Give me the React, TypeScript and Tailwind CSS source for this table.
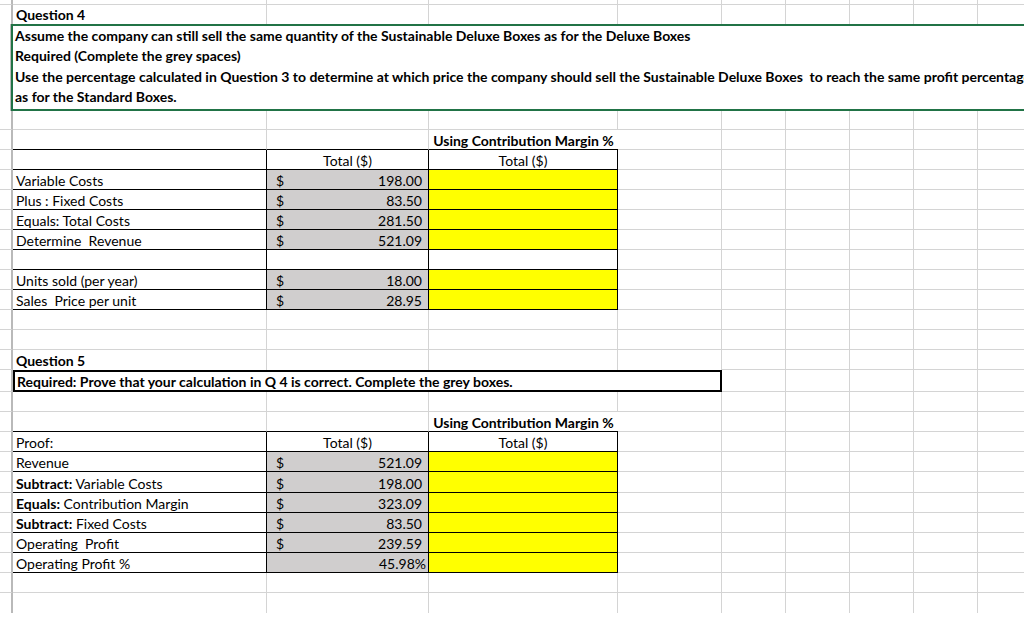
const COLS =
  'grid grid-cols-[13px_254px_162px_189px_104px_64px_64px_64px_64px_64px]'

const GRID = 'border-r border-b border-[#d4d4d4]'

function Stub({ noLine }: { noLine?: boolean }) {
  return (
    <div
      className={
        noLine
          ? 'border-r-2 border-r-[#b9b9b9]'
          : 'border-r-2 border-b border-r-[#b9b9b9] border-b-[#d4d4d4]'
      }
    />
  )
}

function Blank({ n, className = GRID }: { n: number; className?: string }) {
  return (
    <>
      {Array.from({ length: n }).map((_, i) => (
        <div key={i} className={className} />
      ))}
    </>
  )
}

function Label({
  children,
  boxed,
  className = '',
}: {
  children?: React.ReactNode
  boxed?: boolean
  className?: string
}) {
  return (
    <div
      className={`flex items-end whitespace-pre pl-[3px] leading-[17px] ${
        boxed ? 'border-r border-b border-black' : GRID
      } ${className}`}
    >
      {children}
    </div>
  )
}

function Money({ value, dollar = true }: { value: string; dollar?: boolean }) {
  return (
    <div className="flex items-end justify-between whitespace-nowrap border-r border-b border-black bg-[#d0cece] pl-[9px] pr-[6px] leading-[17px]">
      <span>{dollar ? '$' : ''}</span>
      <span className={dollar ? '' : '-mr-[4px]'}>{value}</span>
    </div>
  )
}

function Yellow() {
  return <div className="border-r border-b border-black bg-[#ffff00]" />
}

function TableBlock({
  first,
  rows,
}: {
  first: string
  rows: { label: React.ReactNode; value?: string; dollar?: boolean; h?: string }[]
}) {
  return (
    <>
      <div className={`${COLS} h-[20px]`}>
        <Stub />
        <div className="border-r border-b border-r-[#d4d4d4] border-b-black" />
        <div className="border-r border-b border-r-[#d4d4d4] border-b-black" />
        <div className="flex items-end justify-center whitespace-nowrap border-b border-b-black font-bold leading-[17px]">
          Using Contribution Margin %
        </div>
        <Blank n={6} />
      </div>
      <div className={`${COLS} h-[20px]`}>
        <Stub />
        <Label boxed>{first}</Label>
        <div className="flex items-end justify-center border-r border-b border-black leading-[17px]">
          Total ($)
        </div>
        <div className="flex items-end justify-center border-r border-b border-black leading-[17px]">
          Total ($)
        </div>
        <Blank n={6} />
      </div>
      {rows.map((r, i) => (
        <div key={i} className={`${COLS} ${r.h ?? 'h-[20px]'}`}>
          <Stub />
          <Label boxed>{r.label}</Label>
          {r.value ? (
            <Money value={r.value} dollar={r.dollar !== false} />
          ) : (
            <div className="border-r border-b border-black" />
          )}
          {r.value ? <Yellow /> : <div className="border-r border-b border-black" />}
          <Blank n={6} />
        </div>
      ))}
    </>
  )
}

export default function App() {
  return (
    <div className="h-[628px] w-[1024px] overflow-hidden bg-white font-['Lato',sans-serif] text-[14px] text-black">
      {/* partial top row */}
      <div className={`${COLS} h-[5px]`}>
        <Stub />
        <Blank n={9} />
      </div>

      <div className={`${COLS} h-[19px]`}>
        <Stub noLine />
        <Label className="border-b-0 pb-[1px] font-bold">Question 4</Label>
        <Blank n={8} className="border-r border-[#d4d4d4]" />
      </div>

      {/* green merged block */}
      <div className="flex h-[87px]">
        <div className="w-[12px] shrink-0 border-r-2 border-r-[#b9b9b9]" />
        <div className="-ml-[1px] w-[1040px] shrink-0 whitespace-nowrap border-2 border-r-0 border-[#217346] pl-[2px] font-bold leading-[20.4px]">
          <div>
            Assume the company can still sell the same quantity of the Sustainable Deluxe Boxes as for
            the Deluxe Boxes
          </div>
          <div>Required (Complete the grey spaces)</div>
          <div>
            Use the percentage calculated in Question 3 to determine at which price the company should
            sell the Sustainable Deluxe Boxes&nbsp; to reach the same profit percentage
          </div>
          <div>as for the Standard Boxes.</div>
        </div>
      </div>

      <div className={`${COLS} h-[19px]`}>
        <Stub />
        <Blank n={9} />
      </div>

      <TableBlock
        first=""
        rows={[
          { label: 'Variable Costs', value: '198.00' },
          { label: 'Plus : Fixed Costs', value: '83.50' },
          { label: 'Equals: Total Costs', value: '281.50' },
          { label: 'Determine  Revenue', value: '521.09' },
          { label: '' },
          { label: 'Units sold (per year)', value: '18.00' },
          { label: 'Sales  Price per unit', value: '28.95' },
        ]}
      />

      <div className={`${COLS} h-[20px]`}>
        <Stub />
        <Blank n={9} />
      </div>
      <div className={`${COLS} h-[20px]`}>
        <Stub />
        <Blank n={9} />
      </div>

      <div className={`${COLS} h-[20px]`}>
        <Stub />
        <Label className="border-b-0 pb-[1px] font-bold">Question 5</Label>
        <div className="border-r border-r-[#d4d4d4]" />
        <div className="border-r border-r-[#d4d4d4]" />
        <div className="border-r border-r-[#d4d4d4]" />
        <Blank n={5} />
      </div>

      <div className={`${COLS} h-[22px]`}>
        <Stub />
        <div className="col-span-4 flex items-end whitespace-nowrap border-2 border-black pl-[2px] font-bold leading-[17px]">
          Required: Prove that your calculation in Q 4 is correct. Complete the grey boxes.
        </div>
        <Blank n={5} />
      </div>

      <div className={`${COLS} h-[20px]`}>
        <Stub />
        <Blank n={9} />
      </div>

      <TableBlock
        first="Proof:"
        rows={[
          { label: 'Revenue', value: '521.09' },
          {
            label: (
              <>
                <b>Subtract:</b> Variable Costs
              </>
            ),
            value: '198.00',
            h: 'h-[21px]',
          },
          {
            label: (
              <>
                <b>Equals:</b> Contribution Margin
              </>
            ),
            value: '323.09',
          },
          {
            label: (
              <>
                <b>Subtract:</b> Fixed Costs
              </>
            ),
            value: '83.50',
          },
          { label: 'Operating  Profit', value: '239.59' },
          { label: 'Operating Profit %', value: '45.98%', dollar: false },
        ]}
      />

      <div className={`${COLS} h-[20px]`}>
        <Stub />
        <Blank n={9} />
      </div>
      <div className={`${COLS} h-[20px]`}>
        <Stub noLine />
        <Blank n={9} className="border-r border-[#d4d4d4]" />
      </div>
    </div>
  )
}
